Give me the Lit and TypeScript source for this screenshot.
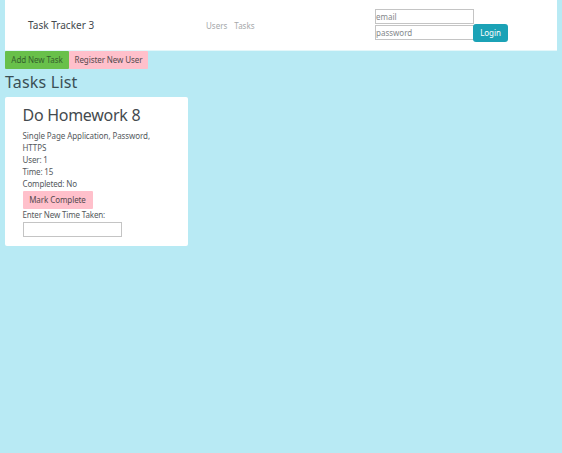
import { LitElement, html, css } from "lit";
import { customElement } from "lit/decorators.js";

@customElement("app-root")
export class AppRoot extends LitElement {
  static styles = css`
    :host {
      display: block;
      box-sizing: border-box;
      height: 453px;
      padding: 0 5px;
      overflow: hidden;
      background: #b8eaf4;
      color: #54595d;
      font: 8px/12px "Noto Sans", "Open Sans", sans-serif;
      white-space: nowrap;
    }
    * { box-sizing: border-box; }
    header {
      display: grid;
      grid-template-columns: 178px 170px 1fr;
      height: 51px;
      padding-left: 22px;
      background: #fff;
      border-bottom: 1px solid #e4f7fa;
    }
    .brand { padding: 19px 0 0 1px; font-size: 10px; letter-spacing: 0.02px; color: #444a4e; }
    nav { display: flex; gap: 7px; padding: 20px 0 0 1px; color: #a5a8aa; }
    .login { display: flex; align-items: flex-end; align-self: start; padding-top: 9px; }
    .fields { display: flex; flex-direction: column; gap: 1px; padding-bottom: 2px; }
    input {
      display: block;
      width: 99px;
      height: 15px;
      margin: 0;
      padding: 0 0 1px;
      border: 1px solid #c4c4c4;
      border-radius: 0;
      background: #fff;
      font: inherit;
      color: inherit;
    }
    input::placeholder { color: #85888b; opacity: 1; }
    button {
      display: block;
      height: 18px;
      margin: 0;
      padding: 0 0 1px;
      border: 0;
      border-radius: 1px;
      font: inherit;
      letter-spacing: -0.08px;
      color: #54494e;
    }
    .submit { width: 35px; height: 18px; margin-left: -1px; border-radius: 3px; background: #1ba2b6; color: #fff; }
    .actions { display: flex; }
    .add { width: 64px; background: #68c04a; color: #34602c; }
    .register { width: 79px; background: #ffc0cb; }
    h1, h2, p { margin: 0; font-weight: 400; }
    h1 { font-size: 16px; line-height: 20px; margin-top: 3px; letter-spacing: 0.2px; color: #3b4f55; }
    .card {
      width: 183px;
      height: 149px;
      margin-top: 5px;
      padding: 8px 17.5px 0;
      border-radius: 2px;
      background: #fff;
    }
    .card p { letter-spacing: -0.15px; }
    .card .description { letter-spacing: -0.09px; }
    h2 { font-size: 16px; line-height: 20px; margin-bottom: 5px; letter-spacing: -0.28px; color: #444a4e; }
    .complete { width: 70px; background: #ffc0cb; margin-top: 1px; }
    .time { margin-top: 1px; }
  `;

  render() {
    return html`
      <header>
        <div class="brand"><span>Task Tracker 3</span></div>
        <nav><span>Users</span><span>Tasks</span></nav>
        <div class="login">
          <div class="fields">
            <input placeholder="email" />
            <input placeholder="password" type="password" />
          </div>
          <button class="submit">Login</button>
        </div>
      </header>
      <div class="actions">
        <button class="add">Add New Task</button>
        <button class="register">Register New User</button>
      </div>
      <h1>Tasks List</h1>
      <section class="card">
        <h2>Do Homework 8</h2>
        <p class="description">Single Page Application, Password,<br />HTTPS</p>
        <p>User: 1</p>
        <p>Time: 15</p>
        <p>Completed: No</p>
        <button class="complete">Mark Complete</button>
        <p>Enter New Time Taken:</p>
        <input class="time" />
      </section>
    `;
  }
}
